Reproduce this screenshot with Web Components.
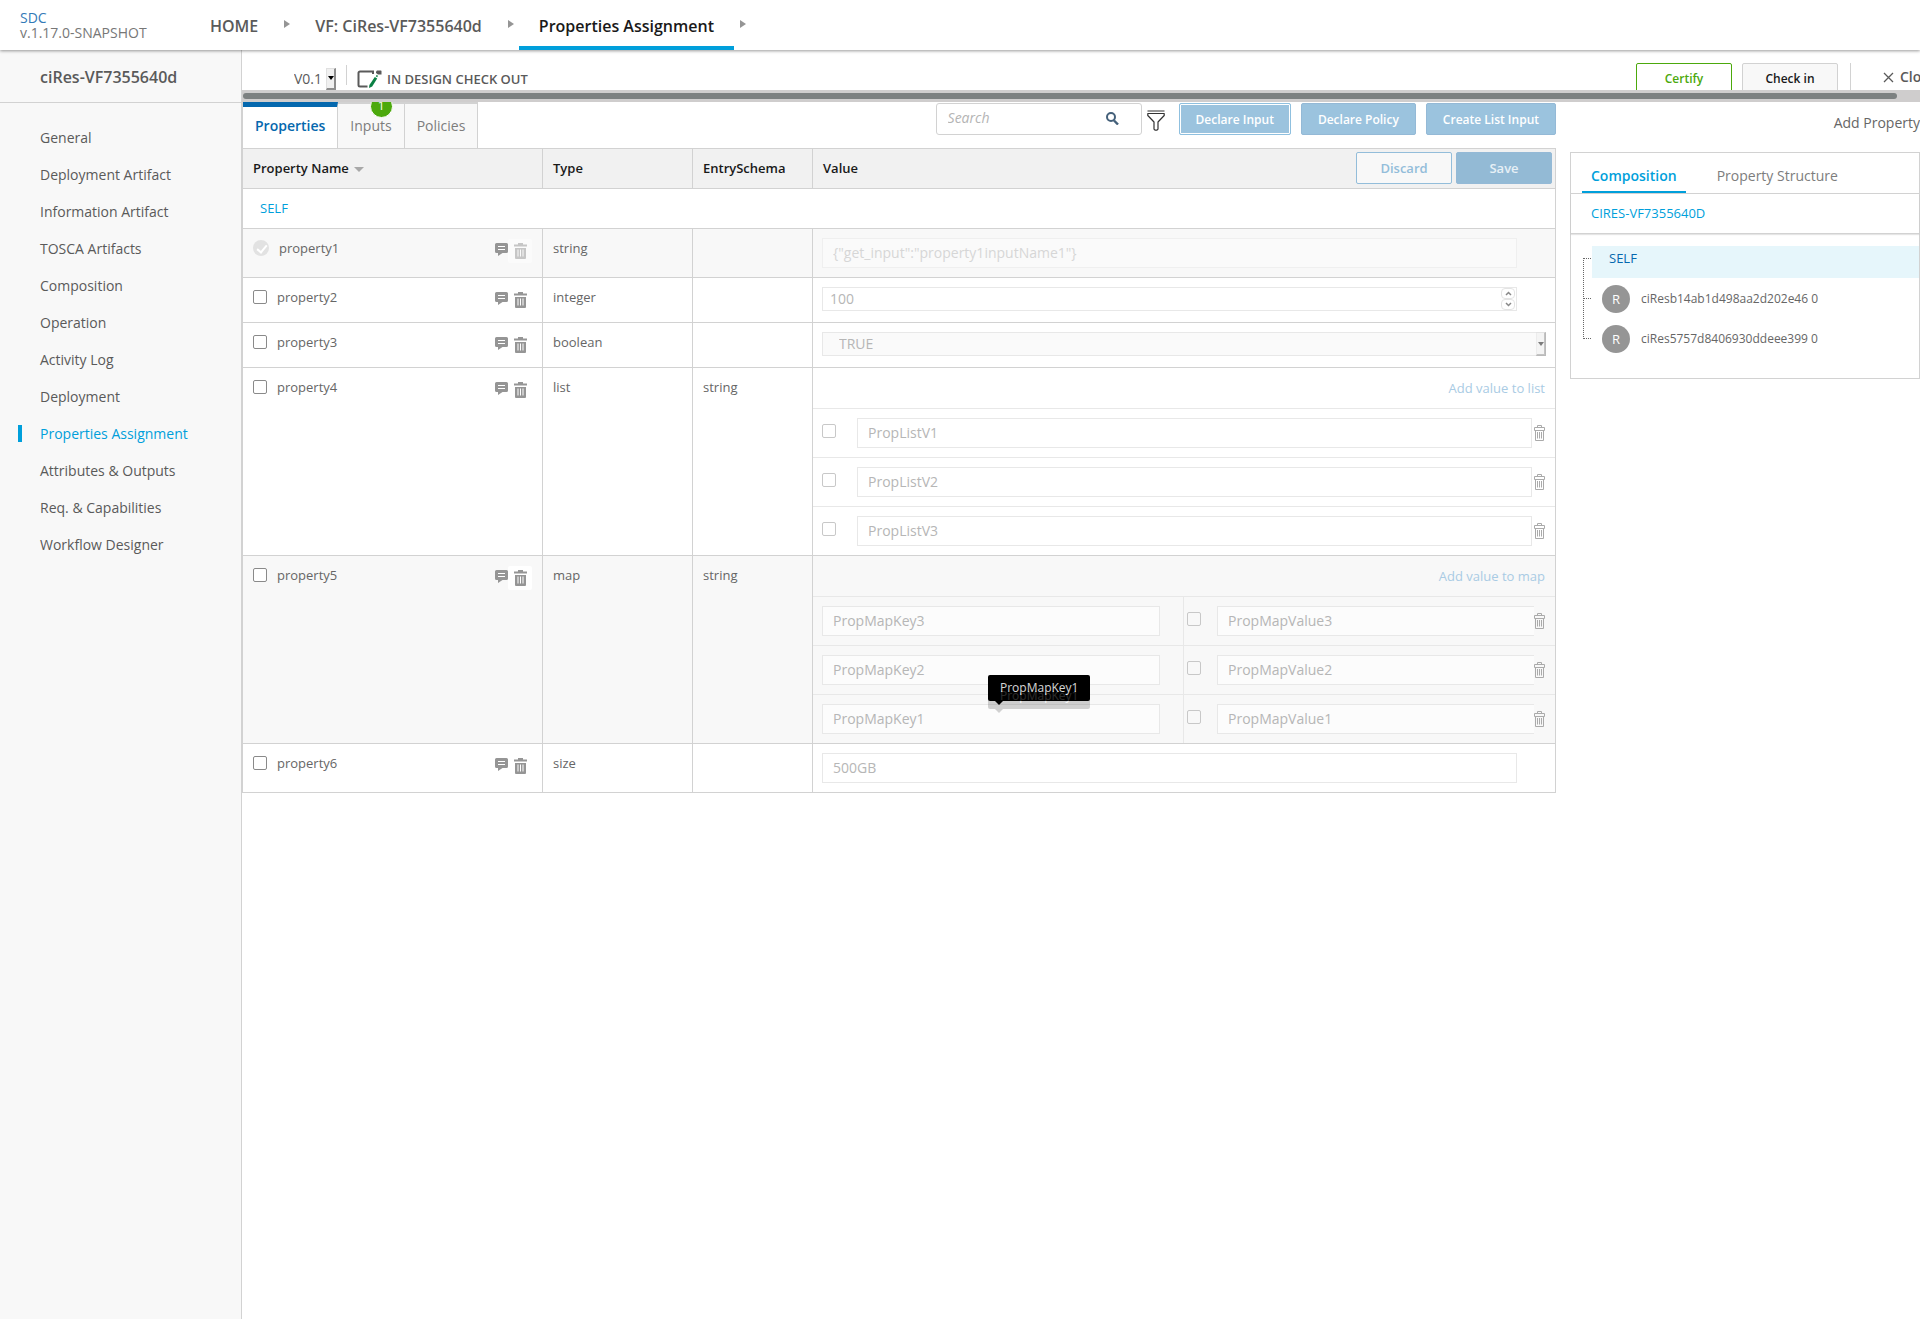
<!DOCTYPE html>
<html lang="en">
<head>
<meta charset="utf-8">
<meta name="viewport" content="width=device-width, initial-scale=1">
<title>SDC - Properties Assignment</title>
<style>
    html, body {
        height: 100%;
        margin: 0;
    }
    body {
        --blue: #009fdb;
        --dark-blue: #0568ae;
        --line: #d2d2d2;
        --soft-line: #e8e8e8;
        --text: #5a5a5a;
        --muted: #959595;
        display: flex;
        flex-direction: column;
        overflow: hidden;
        background: #fff;
        color: var(--text);
        font-family: "Open Sans", "Noto Sans", sans-serif;
        font-size: 13px;
        line-height: 20px;
    }
    .workspace {
        display: flex;
        flex: 1;
        min-height: 0;
    }
    main {
        display: flex;
        flex: 1;
        flex-direction: column;
        min-width: 0;
        overflow: hidden;
    }
    .columns {
        display: flex;
        gap: 14px;
        overflow: hidden;
    }
    .columns section {
        flex: 1;
        min-width: 0;
    }
    .columns aside {
        flex: 0 0 350px;
    }
</style>
</head>
<body>
<sdc-top-nav version="v.1.17.0-SNAPSHOT"></sdc-top-nav>
<div class="workspace">
    <sdc-side-menu heading="ciRes-VF7355640d" active="Properties Assignment"></sdc-side-menu>
    <main>
        <sdc-version-bar></sdc-version-bar>
        <div class="columns">
            <section>
                <sdc-properties-toolbar></sdc-properties-toolbar>
                <sdc-properties-table></sdc-properties-table>
            </section>
            <aside>
                <sdc-composition-panel heading="CIRES-VF7355640D"></sdc-composition-panel>
            </aside>
        </div>
    </main>
</div>

<script>
const ICONS = {
    comment: `<svg width="13" height="13" viewBox="0 0 13 13"><path d="M1.500 0h10A1.500 1.500 0 0 1 13 1.500v7a1.500 1.500 0 0 1-1.500 1.500H7.500L3 13V10H1.500A1.500 1.500 0 0 1 0 8.500v-7A1.500 1.500 0 0 1 1.500 0z" fill="currentColor"/><path d="M3 3.500h7M3 6.500h7" stroke="#fff" stroke-width="1"/></svg>`,
    trash: `<svg width="13" height="16" viewBox="0 0 13 16"><path d="M4 0h5v1.500h4V3.500H0V1.500h4z" fill="currentColor"/><path d="M1 5h11v10a1 1 0 0 1-1 1H2a1 1 0 0 1-1-1z" fill="currentColor"/><path d="M4 6.500v7M6.500 6.500v7M9 6.500v7" stroke="#fff"/></svg>`,
    trashOutline: `<svg width="11" height="16" viewBox="0 0 11 16" fill="none" stroke="currentColor"><path d="M3.500 2V.5h4V2M.5 2.500h10v3H.5zM1.500 5.500v10h8v-10M3.500 7v6.500M5.500 7v6.500M7.500 7v6.500"/></svg>`,
    search: `<svg width="13" height="13" viewBox="0 0 13 13" fill="none" stroke="#44607a"><circle cx="5" cy="5" r="4" stroke-width="2"/><path d="M8 8.500l4 4" stroke-width="2.400"/></svg>`,
    filter: `<svg width="18" height="21" viewBox="0 0 18 21" fill="none" stroke="#333" stroke-width="1.200" stroke-linejoin="round"><path d="M.5 1h17M.8 3.500h16.400v2L11 12v7.200l-1 1H8l-1-1V12L.8 5.500z"/></svg>`,
    edit: `<svg width="25" height="18" viewBox="0 0 25 18"><path d="M16 4V1.500H3A1.500 1.500 0 0 0 1.500 3v12A1.500 1.500 0 0 0 3 16.500h7.500" fill="none" stroke="#5a5a5a" stroke-width="2"/><path d="M19 1.500l1-1h4l.500.500v3.500h-3.500L19 3z" fill="#5a5a5a"/><path d="M17.800 7l2.400 1.500-5 8L12 18l.4-3z" fill="#0a8043"/><path d="M19.200 5.600l1.400.9" stroke="#0a8043" stroke-width="1.500"/></svg>`,
    close: `<svg width="11" height="11" viewBox="0 0 11 11"><path d="M1 1l9 9M10 1l-9 9" stroke="#5a5a5a" stroke-width="1.300"/></svg>`
};

const NAV_ITEMS = ["HOME", "VF: CiRes-VF7355640d", "Properties Assignment"];

const MENU_ITEMS = [
    "General",
    "Deployment Artifact",
    "Information Artifact",
    "TOSCA Artifacts",
    "Composition",
    "Operation",
    "Activity Log",
    "Deployment",
    "Properties Assignment",
    "Attributes & Outputs",
    "Req. & Capabilities",
    "Workflow Designer"
];

const PROPERTIES = [
    { name: "property1", type: "string", schema: "", kind: "text", value: '{"get_input":"property1inputName1"}', declared: true },
    { name: "property2", type: "integer", schema: "", kind: "number", value: "100" },
    { name: "property3", type: "boolean", schema: "", kind: "select", value: "TRUE" },
    { name: "property4", type: "list", schema: "string", kind: "list", value: ["PropListV1", "PropListV2", "PropListV3"] },
    {
        name: "property5",
        type: "map",
        schema: "string",
        kind: "map",
        shaded: true,
        value: [
            ["PropMapKey3", "PropMapValue3"],
            ["PropMapKey2", "PropMapValue2"],
            ["PropMapKey1", "PropMapValue1"]
        ]
    },
    { name: "property6", type: "size", schema: "", kind: "text", value: "500GB" }
];

const escapeText = (text) =>
    text.replace(/&/g, "&amp;").replace(/"/g, "&quot;").replace(/</g, "&lt;");

class SdcIcon extends HTMLElement {
    connectedCallback() {
        this.attachShadow({ mode: "open" });
        this.shadowRoot.innerHTML = `
        <style>
          :host { display: inline-flex; flex: none; }
          svg { display: block; }
        </style>
        ${ICONS[this.getAttribute("name")]}`;
    }
}

class SdcButton extends HTMLElement {
    connectedCallback() {
        this.attachShadow({ mode: "open", delegatesFocus: true });
        this.shadowRoot.innerHTML = `
        <style>
          :host { display: inline-flex; flex: none; }
          button {
            box-sizing: border-box;
            min-width: 96px;
            height: 32px;
            padding: 1px 16px 0;
            border: 1px solid #94b9d6;
            border-radius: 2px;
            background: #9bc3de;
            color: #fff;
            font: 600 12px/20px "Open Sans", "Noto Sans", sans-serif;
            white-space: nowrap;
          }
          :host([look="focused"]) button { border-color: #8fc0df; box-shadow: inset 0 0 0 1px #fff; }
          :host([look="save"]) button { background: #93bad5; color: #e7f0f6; font-size: 13px; }
          :host([look="outline"]) button { background: #f8f8f8; border-color: #93bdda; color: #93bdda; font-size: 13px; }
          :host([look="green"]) button { background: #fff; border-color: #4ca90c; color: #4ca90c; }
          :host([look="gray"]) button { background: #f8f8f8; border-color: #d2d2d2; color: #191919; }
        </style>
        <button type="button"><slot></slot></button>`;
    }
}

class SdcSelect extends HTMLElement {
    connectedCallback() {
        const value = this.getAttribute("value");
        this.attachShadow({ mode: "open", delegatesFocus: true });
        this.shadowRoot.innerHTML = `
        <style>
          :host { display: flex; position: relative; height: 22px; }
          select {
            appearance: none;
            box-sizing: border-box;
            width: 100%;
            margin: 0;
            padding: 0 13px 0 0;
            border: 0;
            background: none;
            color: var(--text);
            font: 14px/20px "Open Sans", "Noto Sans", sans-serif;
            opacity: 1;
          }
          .arrow {
            box-sizing: border-box;
            position: absolute;
            top: 0;
            right: 0;
            bottom: 0;
            display: flex;
            align-items: center;
            justify-content: center;
            width: 10px;
            border: 1px solid #e0e0e0;
            border-width: 1px 2px 2px 1px;
            border-right-color: #8d8d8d;
            border-bottom-color: #8d8d8d;
            background: #f0f0f0;
            pointer-events: none;
          }
          .arrow::before {
            content: "";
            border: 3px solid transparent;
            border-top: 4px solid #000;
            border-bottom: 0;
          }
          :host([boxed]) { height: 24px; }
          :host([boxed]) select {
            padding-left: 16px;
            border: 1px solid var(--soft-line);
            background: #fafafa;
            color: #b6b6b6;
          }
          :host([boxed]) .arrow { opacity: .5; }
        </style>
        <select aria-label="${this.getAttribute("label")}"><option>${value}</option></select>
        <span class="arrow"></span>`;
    }
}

class SdcField extends HTMLElement {
    connectedCallback() {
        const type = this.getAttribute("type") || "text";
        this.attachShadow({ mode: "open", delegatesFocus: true });
        this.shadowRoot.innerHTML = `
        <style>
          :host { display: flex; min-width: 0; position: relative; }
          input {
            appearance: textfield;
            box-sizing: border-box;
            width: 100%;
            height: 30px;
            padding: 0 10px 1px;
            border: 1px solid var(--soft-line);
            border-radius: 0;
            background: rgba(255, 255, 255, .6);
            color: #b6b6b6;
            font: 14px/20px "Open Sans", "Noto Sans", sans-serif;
          }
          input::-webkit-inner-spin-button { appearance: none; }
          input[type="number"] { height: 24px; padding: 0 7px 1px; }
          :host([faded]) { opacity: .5; }
          :host([open-end]) input { border-right: 0; }
          .spinner {
            position: absolute;
            top: 1px;
            right: 2px;
            bottom: 1px;
            display: flex;
            flex-direction: column;
          }
          .spinner button {
            display: flex;
            flex: 1;
            align-items: center;
            justify-content: center;
            width: 14px;
            padding: 0;
            border: 1px solid #e4e4e4;
            border-radius: 4px;
            background: #fff;
          }
        </style>
        <input type="${type}" aria-label="${this.getAttribute("label")}" value="${escapeText(this.getAttribute("value"))}">
        ${type === "number" ? `
        <span class="spinner">
            <button type="button" aria-label="Increase"><svg width="7" height="5" viewBox="0 0 7 5"><path d="M1 4l2.500-2.500L6 4" fill="none" stroke="#888" stroke-width="1.500"/></svg></button>
            <button type="button" aria-label="Decrease"><svg width="7" height="5" viewBox="0 0 7 5"><path d="M1 1l2.500 2.500L6 1" fill="none" stroke="#888" stroke-width="1.500"/></svg></button>
        </span>` : ""}`;
    }
}

class SdcCheckbox extends HTMLElement {
    connectedCallback() {
        const declared = this.hasAttribute("declared");
        this.attachShadow({ mode: "open", delegatesFocus: true });
        this.shadowRoot.innerHTML = `
        <style>
          :host { display: inline-flex; flex: none; }
          label { display: flex; align-items: flex-start; gap: 10px; }
          input {
            appearance: none;
            box-sizing: border-box;
            width: 14px;
            height: 14px;
            margin: 3px 0 0;
            border: 1px solid #8a8a8a;
            border-radius: 2px;
            background: #fff;
          }
          :host([soft]) input { margin: 0 0 4px; border-color: #c8c8c8; background: none; }
          :host([declared]) input {
            width: 16px;
            height: 16px;
            margin-top: 2px;
            border: 0;
            border-radius: 50%;
            background: #e2e2e2;
          }
          :host([declared]) input::before {
            content: "";
            display: block;
            width: 4px;
            height: 8px;
            margin: 3px 0 0 6px;
            border: solid #fff;
            border-width: 0 2px 2px 0;
            transform: rotate(40deg);
          }
        </style>
        <label>
            <input type="checkbox" ${declared ? "checked disabled" : ""} ${this.hasAttribute("label") ? `aria-label="${this.getAttribute("label")}"` : ""}>
            <slot></slot>
        </label>`;
    }
}

class SdcTooltip extends HTMLElement {
    connectedCallback() {
        this.attachShadow({ mode: "open" });
        this.shadowRoot.innerHTML = `
        <style>
          :host { display: block; }
          .bubble {
            padding: 3px 12px;
            border-radius: 2px;
            background: #000;
            color: #fff;
            font-size: 12px;
            line-height: 20px;
            white-space: nowrap;
          }
          .bubble::after {
            content: "";
            position: absolute;
            top: 100%;
            left: 7px;
            border: 4px solid transparent;
            border-top-color: #000;
          }
        </style>
        <div class="bubble" role="tooltip"><slot></slot></div>`;
    }
}

class SdcTopNav extends HTMLElement {
    connectedCallback() {
        this.attachShadow({ mode: "open" });
        this.shadowRoot.innerHTML = `
        <style>
          :host {
            display: flex;
            flex: none;
            height: 50px;
            background: #fff;
            box-shadow: 0 1px 3px rgba(0, 0, 0, .4);
            position: relative;
            z-index: 1;
          }
          .brand {
            box-sizing: border-box;
            width: 190px;
            padding: 10px 0 0 20px;
            font-size: 14px;
            line-height: 15px;
            color: #777;
          }
          .brand a { display: block; color: #337ab7; text-decoration: none; }
          nav, ol, li { display: flex; }
          ol { margin: 0; padding: 0; list-style: none; }
          li { align-items: stretch; }
          li a {
            box-sizing: border-box;
            padding: 13px 20px 0;
            border-bottom: 4px solid transparent;
            color: var(--text);
            font-size: 16px;
            font-weight: 600;
            line-height: 26px;
            text-decoration: none;
            white-space: nowrap;
          }
          li a.active { border-color: var(--blue); color: #191919; }
          li::after {
            content: "";
            align-self: flex-start;
            margin: 20px 5px 0 6px;
            border: 4px solid transparent;
            border-left: 6px solid #959595;
            border-right: 0;
          }
        </style>
        <div class="brand"><a href="#">SDC</a>${this.getAttribute("version")}</div>
        <nav aria-label="Breadcrumb">
            <ol>
                ${NAV_ITEMS.map((item, i) => `<li><a href="#" class="${i === NAV_ITEMS.length - 1 ? "active" : ""}">${item}</a></li>`).join("")}
            </ol>
        </nav>`;
    }
}

class SdcSideMenu extends HTMLElement {
    connectedCallback() {
        const active = this.getAttribute("active");
        this.attachShadow({ mode: "open" });
        this.shadowRoot.innerHTML = `
        <style>
          :host {
            box-sizing: border-box;
            display: block;
            flex: 0 0 242px;
            border-right: 1px solid var(--line);
            background: #f8f8f8;
          }
          h1 {
            margin: 0;
            padding: 15px 0 12px 40px;
            border-bottom: 1px solid var(--line);
            font-size: 16px;
            font-weight: 600;
            line-height: 25px;
          }
          ul { margin: 0; padding: 16px 0 0; list-style: none; }
          a {
            display: flex;
            align-items: center;
            gap: 18px;
            height: 37px;
            padding-left: 18px;
            color: var(--text);
            font-size: 14px;
            text-decoration: none;
          }
          a::before { content: ""; width: 4px; height: 17px; }
          a.active { color: var(--blue); }
          a.active::before { background: var(--blue); }
        </style>
        <h1>${this.getAttribute("heading")}</h1>
        <nav aria-label="Resource">
            <ul>
                ${MENU_ITEMS.map((item) => `<li><a href="#" class="${item === active ? "active" : ""}">${escapeText(item)}</a></li>`).join("")}
            </ul>
        </nav>`;
    }
}

class SdcVersionBar extends HTMLElement {
    connectedCallback() {
        this.attachShadow({ mode: "open" });
        this.shadowRoot.innerHTML = `
        <style>
          :host { display: block; flex: none; }
          .clip { height: 40px; overflow: hidden; }
          .bar {
            display: flex;
            align-items: center;
            height: 57px;
            padding-left: 52px;
          }
          .separator {
            width: 1px;
            height: 20px;
            margin: 0 10px;
            margin-bottom: 8px;
            background: var(--line);
          }
          .separator.tall { height: 40px; margin: 8px 32px 0 12px; }
          .state {
            display: flex;
            flex: 1;
            align-items: center;
            gap: 5px;
            font-weight: 600;
          }
          .actions { display: flex; gap: 10px; }
          .close {
            display: flex;
            align-items: center;
            gap: 6px;
            width: 37px;
            padding-bottom: 3px;
            overflow: hidden;
            color: var(--text);
            font-size: 14px;
            font-weight: 600;
            text-decoration: none;
          }
          .track { padding: 3px 23px 3px 1px; background: #cfcdcd; }
          .thumb { height: 6px; border-radius: 3px; background: #7c8080; }
        </style>
        <div class="clip">
            <div class="bar">
                <sdc-select label="Version" value="V0.1"></sdc-select>
                <span class="separator"></span>
                <div class="state"><sdc-icon name="edit"></sdc-icon>IN DESIGN CHECK OUT</div>
                <div class="actions">
                    <sdc-button look="green">Certify</sdc-button>
                    <sdc-button look="gray">Check in</sdc-button>
                </div>
                <span class="separator tall"></span>
                <a class="close" href="#"><sdc-icon name="close"></sdc-icon>Close</a>
            </div>
        </div>
        <div class="track"><div class="thumb"></div></div>`;
    }
}

class SdcPropertiesToolbar extends HTMLElement {
    connectedCallback() {
        this.attachShadow({ mode: "open" });
        this.shadowRoot.innerHTML = `
        <style>
          :host { display: flex; justify-content: space-between; height: 46px; }
          .tabs { display: flex; border-left: 1px solid var(--line); }
          .tabs button {
            box-sizing: border-box;
            padding: 0 12px 1px;
            border: 0;
            border-top: 2px solid var(--line);
            border-right: 1px solid var(--line);
            background: #f8f8f8;
            color: #7d7d7d;
            font: 14px/20px "Open Sans", "Noto Sans", sans-serif;
            position: relative;
          }
          .tabs button.active {
            padding: 0 12px 3px;
            border-top: 5px solid var(--dark-blue);
            background: #fff;
            color: var(--dark-blue);
            font-weight: 600;
          }
          .badge {
            position: absolute;
            top: -9px;
            right: 11px;
            width: 21px;
            height: 21px;
            border: 1px solid #fff;
            border-radius: 50%;
            background: #4ca90c;
            color: #fff;
            font-size: 12px;
          }
          .tools { display: flex; align-items: flex-start; gap: 10px; padding-top: 1px; }
          .search {
            box-sizing: border-box;
            display: flex;
            align-items: center;
            width: 206px;
            height: 32px;
            padding: 0 22px 0 11px;
            border: 1px solid var(--line);
            border-radius: 3px;
          }
          .search input {
            flex: 1;
            min-width: 0;
            padding: 0 0 2px;
            border: 0;
            outline: 0;
            font: 14px/20px "Open Sans", "Noto Sans", sans-serif;
          }
          .search input::placeholder { color: #b4b4b4; font-style: italic; opacity: 1; }
          .search sdc-icon { padding-bottom: 2px; }
          .filter {
            display: flex;
            margin: 0 4px 0 -5px;
            padding: 7px 0 0;
            border: 0;
            background: none;
          }
        </style>
        <div class="tabs" role="tablist">
            <button type="button" role="tab" class="active" aria-selected="true">Properties</button>
            <button type="button" role="tab">Inputs<span class="badge">1</span></button>
            <button type="button" role="tab">Policies</button>
        </div>
        <div class="tools">
            <label class="search">
                <input type="text" placeholder="Search" aria-label="Search">
                <sdc-icon name="search"></sdc-icon>
            </label>
            <button type="button" class="filter" aria-label="Filter"><sdc-icon name="filter"></sdc-icon></button>
            <sdc-button look="focused">Declare Input</sdc-button>
            <sdc-button>Declare Policy</sdc-button>
            <sdc-button>Create List Input</sdc-button>
        </div>`;
    }
}

class SdcPropertiesTable extends HTMLElement {
    connectedCallback() {
        this.attachShadow({ mode: "open" });
        this.shadowRoot.innerHTML = `
        <style>
          :host { display: block; }
          table {
            box-sizing: border-box;
            width: 100%;
            border: 1px solid var(--line);
            border-width: 1px 0 0 1px;
            border-collapse: separate;
            border-spacing: 0;
            table-layout: fixed;
          }
          .col-name { width: 300px; }
          .col-type { width: 150px; }
          .col-schema { width: 120px; }
          th, td {
            box-sizing: border-box;
            padding: 9px 10px 11px;
            border: 1px solid var(--line);
            border-width: 0 1px 1px 0;
            text-align: left;
            vertical-align: top;
            color: #666;
          }
          thead th {
            height: 40px;
            padding: 2px 3px 4px 10px;
            background: #f1f1f1;
            color: #191919;
            font-weight: 600;
            vertical-align: middle;
          }
          .head { display: flex; align-items: center; gap: 4px; }
          .head span { flex: 1; }
          .sort::after {
            content: "";
            display: inline-block;
            margin-left: 5px;
            border: 5px solid transparent;
            border-top-color: #a8a8a8;
            border-bottom: 0;
            vertical-align: 1px;
          }
          .group td { padding: 9px 17px 10px; height: 40px; color: var(--blue); }
          .shaded td { background: #f8f8f8; }
          .property { display: flex; align-items: flex-start; height: 24px; }
          .property sdc-checkbox { flex: 1; }
          .property sdc-icon { color: #959595; }
          .property > sdc-icon { padding-top: 5px; }
          .remove {
            display: flex;
            justify-content: center;
            width: 24px;
            height: 24px;
            margin: 1px 0 0;
            padding: 4px 0 0;
            border: 0;
            border-radius: 2px;
            background: #fff;
          }
          .declared .remove { opacity: .5; }
          td.value { padding: 0; }
          .single { padding: 9px 38px 9px 9px; }
          .single.wide { padding-right: 9px; }
          .add {
            display: flex;
            justify-content: flex-end;
            height: 40px;
            padding-right: 10px;
            align-items: center;
            color: #a9cbe4;
          }
          .add a { color: inherit; text-decoration: none; }
          .entry {
            display: grid;
            grid-auto-columns: minmax(0, 1fr);
            grid-auto-flow: column;
            height: 48px;
            border-top: 1px solid var(--soft-line);
          }
          .cell {
            display: flex;
            align-items: center;
            padding: 0 10px 0 9px;
          }
          .cell sdc-field { flex: 1; }
          .cell sdc-checkbox { margin-right: 21px; }
          .cell.key { padding-right: 23px; border-right: 1px solid var(--soft-line); position: relative; }
          .cell.pair { padding-left: 3px; }
          .cell.pair sdc-checkbox { margin-right: 16px; }
          .drop {
            display: flex;
            padding: 0;
            margin-left: 2px;
            border: 0;
            background: none;
            color: #aaa;
          }
          .pair .drop { margin-left: 0; }
          sdc-tooltip { position: absolute; top: -20px; left: 175px; z-index: 1; }
          sdc-tooltip.fading { top: -12px; opacity: .17; }
        </style>
        <table>
            <colgroup><col class="col-name"><col class="col-type"><col class="col-schema"><col></colgroup>
            <thead>
                <tr>
                    <th><span class="sort">Property Name</span></th>
                    <th>Type</th>
                    <th>EntrySchema</th>
                    <th>
                        <div class="head">
                            <span>Value</span>
                            <sdc-button look="outline">Discard</sdc-button>
                            <sdc-button look="save">Save</sdc-button>
                        </div>
                    </th>
                </tr>
            </thead>
            <tbody>
                <tr class="group"><td colspan="4">SELF</td></tr>
                ${PROPERTIES.map((property) => this.renderRow(property)).join("")}
            </tbody>
        </table>`;
    }

    renderRow(property) {
        const classes = [
            property.shaded || property.declared ? "shaded" : "",
            property.declared ? "declared" : ""
        ].join(" ");
        return `
        <tr class="${classes}">
            <td>
                <div class="property">
                    <sdc-checkbox ${property.declared ? "declared" : ""}>${property.name}</sdc-checkbox>
                    <sdc-icon name="comment"></sdc-icon>
                    <button type="button" class="remove" aria-label="Delete ${property.name}"><sdc-icon name="trash"></sdc-icon></button>
                </div>
            </td>
            <td>${property.type}</td>
            <td>${property.schema}</td>
            <td class="value">${this.renderValue(property)}</td>
        </tr>`;
    }

    renderValue({ kind, name, value, declared }) {
        const drop = `<button type="button" class="drop" aria-label="Delete value"><sdc-icon name="trashOutline"></sdc-icon></button>`;
        if (kind === "select") {
            return `<div class="single wide"><sdc-select boxed label="${name}" value="${value}"></sdc-select></div>`;
        }
        if (kind === "list") {
            return `<div class="add"><a href="#">Add value to list</a></div>` + value.map((item) => `
            <div class="entry">
                <div class="cell">
                    <sdc-checkbox soft label="Select ${item}"></sdc-checkbox>
                    <sdc-field label="${name}" value="${item}"></sdc-field>
                    ${drop}
                </div>
            </div>`).join("");
        }
        if (kind === "map") {
            return `<div class="add"><a href="#">Add value to map</a></div>` + value.map(([key, item]) => `
            <div class="entry">
                <div class="cell key">
                    <sdc-field label="Key" value="${key}"></sdc-field>
                    ${key === "PropMapKey1" ? `<sdc-tooltip>${key}</sdc-tooltip><sdc-tooltip class="fading">${key}</sdc-tooltip>` : ""}
                </div>
                <div class="cell pair">
                    <sdc-checkbox soft label="Select ${item}"></sdc-checkbox>
                    <sdc-field open-end label="Value" value="${item}"></sdc-field>
                    ${drop}
                </div>
            </div>`).join("");
        }
        return `<div class="single"><sdc-field type="${kind}" label="${name}" value="${escapeText(value)}" ${declared ? "faded" : ""}></sdc-field></div>`;
    }
}

class SdcCompositionPanel extends HTMLElement {
    connectedCallback() {
        this.attachShadow({ mode: "open" });
        this.shadowRoot.innerHTML = `
        <style>
          :host { display: block; }
          .add {
            display: flex;
            justify-content: flex-end;
            height: 50px;
            box-sizing: border-box;
            padding-top: 11px;
            font-size: 14px;
          }
          .add a { color: #666; text-decoration: none; }
          .panel { padding-bottom: 19px; border: 1px solid var(--line); }
          .tabs {
            display: flex;
            gap: 22px;
            height: 40px;
            padding-left: 11px;
            border-bottom: 1px solid var(--line);
          }
          .tabs button {
            padding: 7px 9px 0;
            border: 0;
            border-bottom: 2px solid transparent;
            background: none;
            color: #7d7d7d;
            font: 14px/20px "Open Sans", "Noto Sans", sans-serif;
          }
          .tabs button.active { border-color: var(--blue); color: var(--blue); font-weight: 600; }
          h2 {
            margin: 0;
            padding: 9px 20px 10px;
            border-bottom: 1px solid var(--line);
            box-shadow: 0 1px 1px rgba(0, 0, 0, .1);
            color: var(--blue);
            font-size: 13px;
            font-weight: 400;
            line-height: 20px;
          }
          .tree { display: flex; padding: 12px 0 0 12px; }
          .tree svg { flex: none; }
          ul { flex: 1; margin: 0; padding: 0; list-style: none; color: #666; font-size: 12px; }
          li { display: flex; align-items: center; gap: 11px; height: 40px; padding-left: 10px; }
          li.selected {
            align-items: flex-start;
            height: 32px;
            margin-bottom: 1px;
            padding-left: 17px;
            background: #e6f6fb;
            color: var(--dark-blue);
            font-size: 13px;
            line-height: 24px;
          }
          .avatar {
            width: 28px;
            border-radius: 50%;
            background: #959595;
            color: #fff;
            font-size: 13px;
            line-height: 28px;
            text-align: center;
          }
        </style>
        <div class="add"><a href="#">Add Property</a></div>
        <div class="panel">
            <div class="tabs" role="tablist">
                <button type="button" role="tab" class="active" aria-selected="true">Composition</button>
                <button type="button" role="tab">Property Structure</button>
            </div>
            <h2>${this.getAttribute("heading")}</h2>
            <div class="tree">
                <svg width="9" height="100" fill="none" stroke="#666" stroke-dasharray="1 1"><path d="M.5 12v81M1 12.500h8M1 52.500h8M1 92.500h7"/></svg>
                <ul>
                    <li class="selected">SELF</li>
                    <li><span class="avatar">R</span>ciResb14ab1d498aa2d202e46 0</li>
                    <li><span class="avatar">R</span>ciRes5757d8406930ddeee399 0</li>
                </ul>
            </div>
        </div>`;
    }
}

customElements.define("sdc-icon", SdcIcon);
customElements.define("sdc-button", SdcButton);
customElements.define("sdc-select", SdcSelect);
customElements.define("sdc-field", SdcField);
customElements.define("sdc-checkbox", SdcCheckbox);
customElements.define("sdc-tooltip", SdcTooltip);
customElements.define("sdc-top-nav", SdcTopNav);
customElements.define("sdc-side-menu", SdcSideMenu);
customElements.define("sdc-version-bar", SdcVersionBar);
customElements.define("sdc-properties-toolbar", SdcPropertiesToolbar);
customElements.define("sdc-properties-table", SdcPropertiesTable);
customElements.define("sdc-composition-panel", SdcCompositionPanel);
</script>
</body>
</html>
